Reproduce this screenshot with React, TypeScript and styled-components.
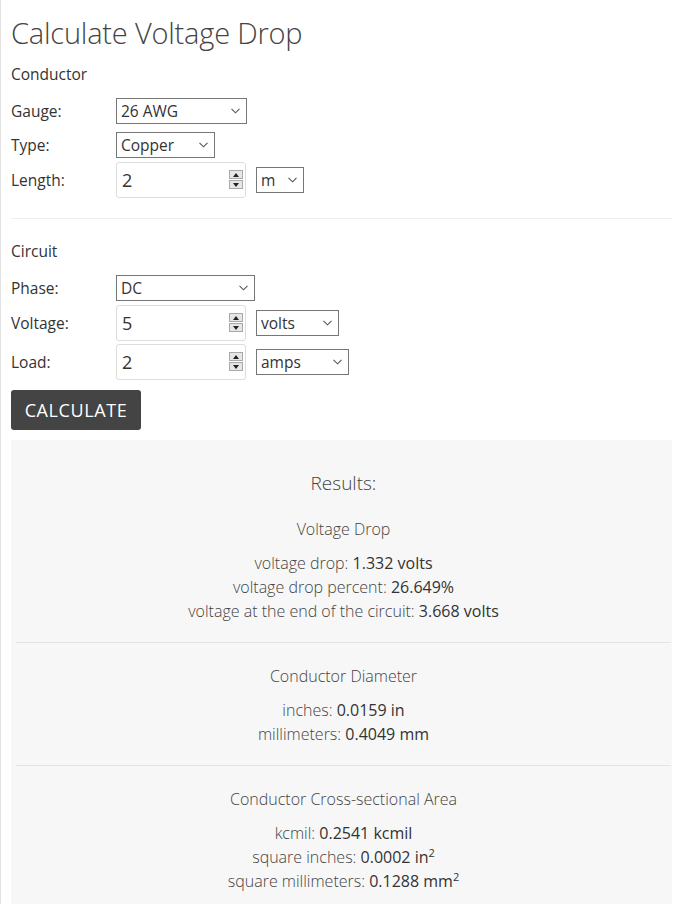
import React from 'react';
import styled, { createGlobalStyle } from 'styled-components';

const GlobalStyle = createGlobalStyle`
  html, body {
    margin: 0;
    padding: 0;
    background: #fff;
  }
  body {
    font-family: 'Open Sans', 'Noto Sans', 'Liberation Sans', sans-serif;
    font-size: 15px;
    color: #333;
  }
  * {
    box-sizing: border-box;
  }
`;

const Page = styled.div`
  min-height: 904px;
  border-left: 1px solid #e2e2e2;
  padding: 0 7px 0 10px;
`;

const Title = styled.h1`
  margin: 0;
  padding-top: 13px;
  height: 56px;
  font-size: 29px;
  font-weight: 300;
  color: #444;
  letter-spacing: -0.2px;
`;

const SectionLabel = styled.div`
  height: 38px;
  line-height: 36px;
  font-size: 15.5px;
`;

const Row = styled.div<{ $pad: string }>`
  display: flex;
  align-items: center;
  padding: ${(p) => p.$pad};
  font-size: 15.5px;
`;

const Label = styled.div`
  width: 105px;
  flex: none;
`;

const SelectBox = styled.div<{ $w: number }>`
  position: relative;
  width: ${(p) => p.$w}px;
  height: 26px;
  border: 1px solid #767676;
  background: #fff;
`;

const Select = styled.select`
  appearance: none;
  width: 100%;
  height: 100%;
  border: none;
  outline: none;
  background: transparent;
  font: inherit;
  font-size: 15.5px;
  color: #333;
  padding: 0 0 0 4px;
`;

const Chevron = styled.svg`
  position: absolute;
  right: 6px;
  top: 9px;
  pointer-events: none;
`;

const NumberBox = styled.div`
  position: relative;
  width: 130px;
  height: 36px;
  border: 1px solid #ddd;
  border-radius: 3px;
  margin-right: 10px;
  background: #fff;
`;

const NumberInput = styled.input`
  width: 100%;
  height: 100%;
  border: none;
  outline: none;
  background: transparent;
  font: inherit;
  font-size: 18px;
  color: #333;
  padding: 0 0 0 5px;
`;

const Spinner = styled.div`
  position: absolute;
  right: 2px;
  top: 7px;
  width: 14px;
  height: 19px;
  display: flex;
  flex-direction: column;
  gap: 1px;
`;

const SpinHalf = styled.div`
  flex: 1;
  display: flex;
  align-items: center;
  justify-content: center;
  background: #e6e6e6;
  border: 1px solid #a9a9a9;
`;

const Divider = styled.hr`
  border: none;
  border-top: 1px solid #eee;
  margin: 20px 0 14px;
`;

const CalcButton = styled.button`
  display: block;
  margin-top: 10px;
  width: 130px;
  height: 40px;
  border: none;
  border-radius: 3px;
  background: #444;
  color: #fff;
  font: inherit;
  font-size: 18px;
  letter-spacing: 0.6px;
`;

const Results = styled.div`
  margin-top: 10px;
  background: #f7f7f7;
  padding: 0 1px 0 5px;
  min-height: 470px;
  text-align: center;
`;

const ResultsTitle = styled.div`
  padding-top: 29px;
  height: 77px;
  line-height: 28px;
  font-size: 19px;
  font-weight: 300;
  color: #444;
`;

const Section = styled.div<{ $top: number; $last?: boolean }>`
  padding: ${(p) => p.$top}px 0 19px;
  border-bottom: ${(p) => (p.$last ? 'none' : '1px solid #e3e3e3')};
`;

const SectionTitle = styled.div`
  line-height: 24px;
  font-size: 16px;
  font-weight: 300;
  color: #444;
  margin-bottom: 10px;
`;

const Line = styled.div`
  line-height: 24px;
  font-size: 16px;
  color: #444;
  font-weight: 300;
  b {
    font-weight: 500;
    color: #333;
  }
  sup {
    font-size: 11px;
    line-height: 0;
  }
`;

const chev = (
  <Chevron width="9" height="6" viewBox="0 0 9 6">
    <path d="M0.5 0.8 L4.5 4.8 L8.5 0.8" fill="none" stroke="#555" strokeWidth="1.1" />
  </Chevron>
);

function Dropdown({ width, options }: { width: number; options: string[] }) {
  return (
    <SelectBox $w={width}>
      <Select defaultValue={options[0]}>
        {options.map((o) => (
          <option key={o}>{o}</option>
        ))}
      </Select>
      {chev}
    </SelectBox>
  );
}

function NumberField({ value }: { value: string }) {
  return (
    <NumberBox>
      <NumberInput type="text" defaultValue={value} />
      <Spinner>
        <SpinHalf>
          <svg width="6" height="4" viewBox="0 0 6 4">
            <path d="M0 4 L3 0 L6 4 Z" fill="#222" />
          </svg>
        </SpinHalf>
        <SpinHalf>
          <svg width="6" height="4" viewBox="0 0 6 4">
            <path d="M0 0 L6 0 L3 4 Z" fill="#222" />
          </svg>
        </SpinHalf>
      </Spinner>
    </NumberBox>
  );
}

export default function App() {
  return (
    <>
      <GlobalStyle />
      <Page>
        <Title>Calculate Voltage Drop</Title>
        <SectionLabel>Conductor</SectionLabel>
        <Row $pad="4px 0">
          <Label>Gauge:</Label>
          <Dropdown width={131} options={['26 AWG', '24 AWG', '22 AWG']} />
        </Row>
        <Row $pad="4px 0">
          <Label>Type:</Label>
          <Dropdown width={99} options={['Copper', 'Aluminum']} />
        </Row>
        <Row $pad="0">
          <Label>Length:</Label>
          <NumberField value="2" />
          <Dropdown width={48} options={['m', 'ft']} />
        </Row>
        <Divider />
        <SectionLabel>Circuit</SectionLabel>
        <Row $pad="4px 0">
          <Label>Phase:</Label>
          <Dropdown width={139} options={['DC', 'AC single phase', 'AC three phase']} />
        </Row>
        <Row $pad="0 0 3px">
          <Label>Voltage:</Label>
          <NumberField value="5" />
          <Dropdown width={83} options={['volts', 'kV']} />
        </Row>
        <Row $pad="0">
          <Label>Load:</Label>
          <NumberField value="2" />
          <Dropdown width={93} options={['amps', 'watts', 'kW']} />
        </Row>
        <CalcButton>CALCULATE</CalcButton>
        <Results>
          <ResultsTitle>Results:</ResultsTitle>
          <Section $top={0}>
            <SectionTitle>Voltage Drop</SectionTitle>
            <Line>
              voltage drop: <b>1.332 volts</b>
            </Line>
            <Line>
              voltage drop percent: <b>26.649%</b>
            </Line>
            <Line>
              voltage at the end of the circuit: <b>3.668 volts</b>
            </Line>
          </Section>
          <Section $top={21}>
            <SectionTitle>Conductor Diameter</SectionTitle>
            <Line>
              inches: <b>0.0159 in</b>
            </Line>
            <Line>
              millimeters: <b>0.4049 mm</b>
            </Line>
          </Section>
          <Section $top={21} $last>
            <SectionTitle>Conductor Cross-sectional Area</SectionTitle>
            <Line>
              kcmil: <b>0.2541 kcmil</b>
            </Line>
            <Line>
              square inches: <b>0.0002 in<sup>2</sup></b>
            </Line>
            <Line>
              square millimeters: <b>0.1288 mm<sup>2</sup></b>
            </Line>
          </Section>
        </Results>
      </Page>
    </>
  );
}
